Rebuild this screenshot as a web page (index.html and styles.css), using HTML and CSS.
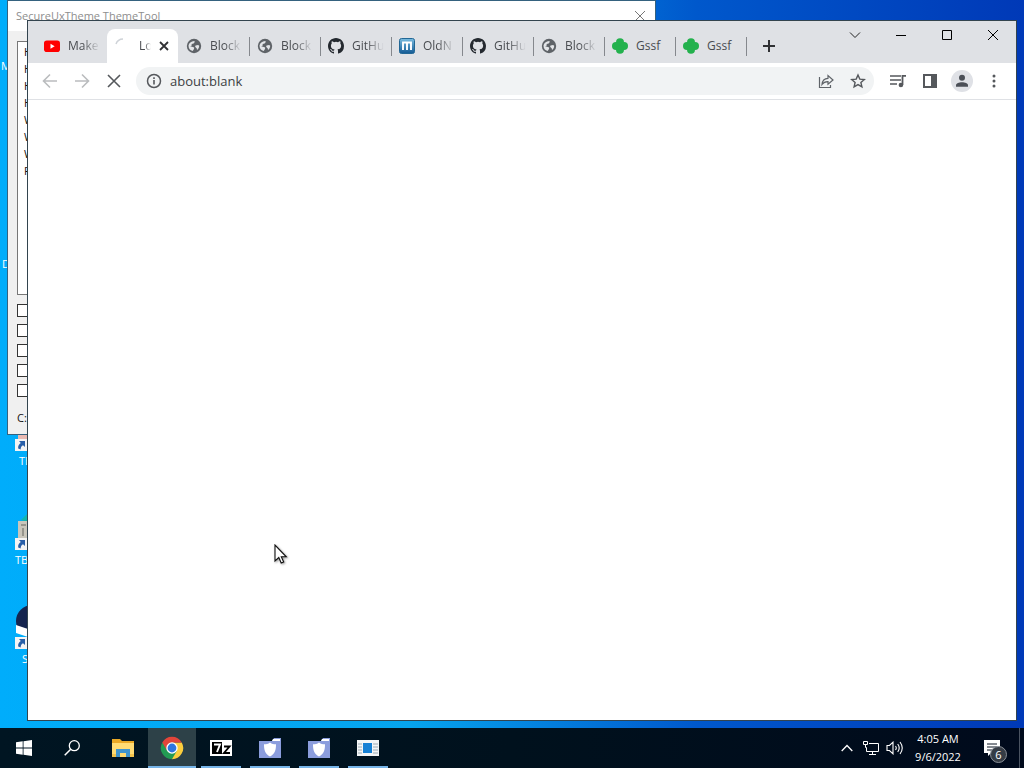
FILE: index.html
```html
<!DOCTYPE html>
<html lang="en">
<head>
<meta charset="utf-8">
<title>Desktop</title>
<meta name="viewport" content="width=device-width, initial-scale=1">
<link rel="stylesheet" href="styles.css">
</head>
<body>
<svg class="defs" aria-hidden="true">
  <symbol id="globe" viewBox="0 0 16 16"><circle cx="8" cy="8" r="7.2" fill="#5f6368"/><path d="M2.500 7.500C3 5 5 3 8.300 2.900L8.800 4 7.600 5.500 5.600 6 5.800 7.400 4.200 8.200 6.800 8.900 8.200 9.400 8 11 6.700 12.900C4 12.500 2.500 10.500 2.500 7.500ZM9.500 7.500 12.100 6.900 13.200 7.800C13.200 9.600 12.300 11.300 11 12L10.800 10.400 9.100 8.700Z" fill="#e3e5e8"/></symbol>
  <symbol id="github" viewBox="0 0 16 16"><path d="M8 0C3.58 0 0 3.58 0 8c0 3.54 2.29 6.53 5.47 7.59.4.07.55-.17.55-.38 0-.19-.01-.82-.01-1.49-2.01.37-2.53-.49-2.69-.94-.09-.23-.48-.94-.82-1.13-.28-.15-.68-.52-.01-.53.63-.01 1.08.58 1.23.82.72 1.21 1.87.87 2.33.66.07-.52.28-.87.51-1.07-1.78-.2-3.64-.89-3.64-3.95 0-.87.31-1.59.82-2.15-.08-.2-.36-1.02.08-2.12 0 0 .67-.21 2.2.82a7.6 7.6 0 0 1 4 0c1.53-1.04 2.2-.82 2.2-.82.44 1.1.16 1.92.08 2.12.51.56.82 1.27.82 2.15 0 3.07-1.87 3.75-3.65 3.95.29.25.54.73.54 1.48 0 1.07-.01 1.93-.01 2.2 0 .21.15.46.55.38A8.01 8.01 0 0 0 16 8c0-4.42-3.58-8-8-8Z" fill="#24292f"/></symbol>
  <symbol id="clover" viewBox="0 0 16 16"><g fill="#23b14d"><circle cx="8" cy="4.2" r="4"/><circle cx="4" cy="8" r="4"/><circle cx="12" cy="8" r="4"/><circle cx="8" cy="11.8" r="4"/></g></symbol>
  <symbol id="shortcut" viewBox="0 0 12 12"><path d="M0 0h12v12H0Z" fill="#f4f4f4"/><path d="M4 2h6v6L8 6.200C6.300 7.200 5.600 8.500 5.700 10.500L3.200 9.400C2.800 7 4 5.300 5.800 4Z" fill="#285fa8"/></symbol>
  <symbol id="shield-folder" viewBox="0 0 22 20"><path d="M0 3h13l2-3h7v20H0Z" fill="#8b9ddd"/><path d="M14 1h7v2h-8Z" fill="#fff"/><path d="M11 4.500c2 1.500 3.500 1.700 6 1.700 0 6-1 9.500-6 12.200-5-2.700-6-6.200-6-12.200 2.500 0 4-.2 6-1.700Z" fill="#fff"/></symbol>
</svg>

<div class="desktop">
  <main class="workspace">
    <span class="shortcut shortcut-m">M</span>
    <span class="shortcut shortcut-d">D</span>
    <div class="shortcut shortcut-te">
      <svg class="shortcut-icon" viewBox="0 0 32 32"><path d="M3 10h26v12H3Z" fill="#e8b9b2"/><use href="#shortcut" y="20" width="12" height="12"/></svg>
      <span>TE</span>
    </div>
    <div class="shortcut shortcut-tb">
      <svg class="shortcut-icon" viewBox="0 0 32 32"><path d="M6 2 12-4v8Z" fill="#12b6ad"/><path d="M3 3h27v24H3Z" fill="#c9c6bb"/><path d="M6 6h5v2H6ZM7 10h2v8H7Z" fill="#96958c"/><use href="#shortcut" y="20" width="12" height="12"/></svg>
      <span>TB</span>
    </div>
    <div class="shortcut shortcut-s">
      <svg class="shortcut-icon" viewBox="0 0 32 32"><circle cx="17" cy="4" r="16" fill="#14244f"/><path d="M1 8 13 12v8L1 16Z" fill="#fff"/><use href="#shortcut" y="20" width="12" height="12"/></svg>
      <span>S</span>
    </div>

    <section class="tool" aria-label="SecureUxTheme ThemeTool">
      <header class="tool-title">
        <span>SecureUxTheme ThemeTool</span>
        <button class="tool-close" aria-label="Close"><svg width="12" height="12" viewBox="0 0 12 12"><path d="M1 1l10 10M11 1 1 11" stroke="#777" fill="none"/></svg></button>
      </header>
      <div class="tool-body">
        <ul class="themes">
          <li>H</li><li>H</li><li>H</li><li>H</li><li>W</li><li>W</li><li>W</li><li>F</li>
        </ul>
        <div class="checks">
          <input type="checkbox" aria-label="Option 1">
          <input type="checkbox" aria-label="Option 2">
          <input type="checkbox" aria-label="Option 3">
          <input type="checkbox" aria-label="Option 4">
          <input type="checkbox" aria-label="Option 5">
        </div>
        <p class="path">C:</p>
      </div>
    </section>

    <section class="browser" aria-label="Browser">
      <header class="strip">
        <div class="tabs">
          <button class="tab"><svg class="fav" viewBox="0 0 16 16"><rect y="2.500" width="16" height="11.500" rx="2.800" fill="#f00"/><path d="M6.500 5.800v5L10.700 8.300Z" fill="#fff"/></svg><span class="name">Make</span></button>
          <div class="tab active"><svg class="fav" viewBox="0 0 16 16"><path d="M1 6A7.500 7.500 0 0 1 8 1" stroke="#cfd3d8" stroke-width="1.500" fill="none"/></svg><span class="name">Lo</span><button class="tab-close" aria-label="Close tab"><svg width="10" height="10" viewBox="0 0 10 10"><path d="M1 1l8 8M9 1 1 9" stroke="#303134" stroke-width="1.800"/></svg></button></div>
          <button class="tab"><svg class="fav"><use href="#globe"/></svg><span class="name">Block</span></button>
          <button class="tab"><svg class="fav"><use href="#globe"/></svg><span class="name">Block</span></button>
          <button class="tab"><svg class="fav"><use href="#github"/></svg><span class="name">GitHu</span></button>
          <button class="tab"><svg class="fav" viewBox="0 0 16 16"><defs><linearGradient id="blue" x2="0" y2="1"><stop stop-color="#79bce0"/><stop offset="1" stop-color="#135a94"/></linearGradient></defs><rect x=".5" y=".5" width="15" height="15" rx="2" fill="url(#blue)" stroke="#226795"/><path d="M4 12V4.500h8V12M8 4.500V12" fill="none" stroke="#fff" stroke-width="1.900"/></svg><span class="name">OldN</span></button>
          <button class="tab"><svg class="fav"><use href="#github"/></svg><span class="name">GitHu</span></button>
          <button class="tab"><svg class="fav"><use href="#globe"/></svg><span class="name">Block</span></button>
          <button class="tab"><svg class="fav"><use href="#clover"/></svg><span class="name whole">Gssf</span></button>
          <button class="tab"><svg class="fav"><use href="#clover"/></svg><span class="name whole">Gssf</span></button>
          <button class="new-tab" aria-label="New tab"><svg width="12" height="12" viewBox="0 0 12 12"><path d="M6 0v12M0 6h12" stroke="#303134" stroke-width="2"/></svg></button>
        </div>
        <div class="caption">
          <button aria-label="Search tabs"><svg width="12" height="12" viewBox="0 0 12 12"><path d="M1 3.500l5 5 5-5" stroke="#222" fill="none"/></svg></button>
          <button aria-label="Minimize"><svg width="12" height="12" viewBox="0 0 12 12"><path d="M1 6.500h10" stroke="#000"/></svg></button>
          <button aria-label="Maximize"><svg width="12" height="12" viewBox="0 0 12 12"><path d="M1.500 1.500h9v9h-9Z" stroke="#000" fill="none"/></svg></button>
          <button aria-label="Close"><svg width="12" height="12" viewBox="0 0 12 12"><path d="M1 1l10 10M11 1 1 11" stroke="#000"/></svg></button>
        </div>
      </header>
      <nav class="toolbar">
        <button class="tool-button" aria-label="Back"><svg width="16" height="16" viewBox="0 0 16 16"><path d="M15 8H2M8 1.500 1.500 8 8 14.500" fill="none" stroke="#babcbe" stroke-width="1.600"/></svg></button>
        <button class="tool-button" aria-label="Forward"><svg width="16" height="16" viewBox="0 0 16 16"><path d="M1 8h13M8 1.500 14.500 8 8 14.500" fill="none" stroke="#babcbe" stroke-width="1.600"/></svg></button>
        <button class="tool-button" aria-label="Stop"><svg width="14" height="14" viewBox="0 0 14 14"><path d="M1 1l12 12M13 1 1 13" stroke="#55585c" stroke-width="1.600"/></svg></button>
        <div class="omnibox">
          <svg class="info" width="16" height="16" viewBox="0 0 16 16"><circle cx="8" cy="8" r="6.500" fill="none" stroke="#55585c" stroke-width="1.500"/><path d="M8 7v4.500M8 4.200v1.700" stroke="#55585c" stroke-width="1.600"/></svg>
          <input class="address" aria-label="Address" value="about:blank">
          <button class="tool-button" aria-label="Share"><svg width="16" height="16" viewBox="0 0 16 16"><path d="M1.500 4v10.500h11v-2.500M4 11.500C4.300 7.700 6.500 5.500 10 5.300V2.500l5 4.500-5 4.300V8.700C7.500 8.600 5.500 9.500 4 11.500Z" fill="none" stroke="#5f6368" stroke-width="1.200"/></svg></button>
          <button class="tool-button" aria-label="Bookmark"><svg width="16" height="16" viewBox="0 0 16 16"><path d="M8 2l1.800 4.100 4.500.4-3.400 3 1 4.400L8 11.600l-3.900 2.300 1-4.400-3.400-3 4.500-.4Z" fill="none" stroke="#55585c" stroke-width="1.400"/></svg></button>
        </div>
        <button class="tool-button" aria-label="Media"><svg width="18" height="16" viewBox="0 0 18 16"><path d="M1 3h11M1 7h11M1 11h7" stroke="#55585c" stroke-width="1.700"/><path d="M13.500 12V2.800H17" fill="none" stroke="#55585c" stroke-width="1.800"/><circle cx="11.900" cy="12" r="2.300" fill="#55585c"/></svg></button>
        <button class="tool-button" aria-label="Side panel"><svg width="14" height="14" viewBox="0 0 14 14"><path d="M0 0h14v14H0ZM2 2v10h6V2Z" fill="#55585c" fill-rule="evenodd"/></svg></button>
        <button class="tool-button" aria-label="Profile"><svg width="22" height="22" viewBox="0 0 22 22"><circle cx="11" cy="11" r="11" fill="#dfe1e6"/><circle cx="11" cy="7.800" r="3" fill="#4b4f57"/><path d="M5 16.700v-1.500c0-4 12-4 12 0v1.500Z" fill="#4b4f57"/></svg></button>
        <button class="tool-button" aria-label="Menu"><svg width="4" height="14" viewBox="0 0 4 14"><g fill="#55585c"><circle cx="2" cy="2" r="1.500"/><circle cx="2" cy="7" r="1.500"/><circle cx="2" cy="12" r="1.500"/></g></svg></button>
      </nav>
      <div class="page"></div>
    </section>

    <svg class="pointer" viewBox="0 0 14 21"><path d="M1 1v16l3.800-3.500L7.200 19l2.500-1-2.400-5.200h5Z" fill="#fff" stroke="#111" stroke-width="1.100"/></svg>
  </main>

  <footer class="taskbar">
    <button class="task" aria-label="Start"><svg width="16" height="16" viewBox="0 0 16 16"><path d="M0 2.200 6.700 1.300v6.200H0ZM7.500 1.200 16 0v7.500H7.500ZM0 8.400h6.700v6.300L0 13.800ZM7.500 8.400H16V16l-8.500-1.200Z" fill="#fff"/></svg></button>
    <button class="task" aria-label="Search"><svg width="16" height="16" viewBox="0 0 16 16"><circle cx="10.300" cy="5.700" r="5" fill="none" stroke="#fff" stroke-width="1.300"/><path d="M6.700 9.300.7 15.300" stroke="#fff" stroke-width="1.500"/></svg></button>
    <div class="apps">
      <button class="task" aria-label="File Explorer"><svg width="22" height="18" viewBox="0 0 22 18"><path d="M0 0h8l2 2h12v16H0Z" fill="#e9a826"/><path d="M0 4h22v14H0Z" fill="#ffdb73"/><path d="M4 10h14v8h-4v-4H8v4H4Z" fill="#3f94ce"/><path d="M0 15h4v3H0ZM18 15h4v3h-4Z" fill="#f4c34c"/></svg></button>
      <button class="task open current" aria-label="Chrome"><svg width="24" height="24" viewBox="0 0 24 24"><path d="M12 12V23.200A11.200 11.200 0 0 0 21.700 6.400H12Z" fill="#fccd3d"/><path d="M12 12 2.300 6.400A11.200 11.200 0 0 0 12 23.200L16.900 14.800Z" fill="#229b53"/><path d="M2.300 6.400A11.200 11.200 0 0 1 21.700 6.400H12L7.100 14.800Z" fill="#e2453a"/><circle cx="12" cy="12" r="5.700" fill="#fff"/><circle cx="12" cy="12" r="4.400" fill="#2f76de"/></svg></button>
      <button class="task open" aria-label="7-Zip"><svg width="22" height="16" viewBox="0 0 22 16"><path d="M0 0h22v16H0Z" fill="#fff"/><path d="M2 2h10v12H2Z" fill="#000"/><path d="M4 4.500h6L7 12" fill="none" stroke="#fff" stroke-width="1.900"/><path d="M14 6.500h5.500L14 13h6" fill="none" stroke="#000" stroke-width="1.900"/></svg></button>
      <button class="task open" aria-label="Folder one"><svg width="22" height="20"><use href="#shield-folder"/></svg></button>
      <button class="task open" aria-label="Folder two"><svg width="22" height="20"><use href="#shield-folder"/></svg></button>
      <button class="task open" aria-label="ThemeTool"><svg width="22" height="16" viewBox="0 0 22 16"><path d="M0 0h22v16H0Z" fill="#f3f5f6"/><path d="M6 3h9v10H6Z" fill="#1680d4"/><path d="M1 4h4M1 7h4M1 10h4M1 13h4M16 4h5M16 7h5M16 10h5M16 13h5" stroke="#9baab4"/></svg></button>
    </div>
    <div class="tray">
      <button class="tray-icon" aria-label="Show hidden icons"><svg width="12" height="8" viewBox="0 0 12 8"><path d="M.7 7 6 1.500 11.300 7" fill="none" stroke="#fff" stroke-width="1.300"/></svg></button>
      <button class="tray-icon" aria-label="Network"><svg width="16" height="14" viewBox="0 0 16 14"><path d="M6 2.500h9.500v8h-12V6.500M9.500 10.500v3M6 13.500h7M.5.500h4v3h-4ZM2.500 3.500v3h1" fill="none" stroke="#fff"/></svg></button>
      <button class="tray-icon" aria-label="Volume"><svg width="18" height="14" viewBox="0 0 18 14"><path d="M1 4.500h2.500L7 1.200v11.600L3.500 9.500H1ZM9.500 5q1.500 2 0 4M11.700 3q3 4 0 8M14 1q4.500 6 0 12" fill="none" stroke="#fff" stroke-width="1.100"/></svg></button>
      <button class="clock"><span>4:05 AM</span><span>9/6/2022</span></button>
      <button class="notices" aria-label="Notifications, 6 new"><svg width="16" height="16" viewBox="0 0 16 16"><path d="M0 0h16v13H7l-3 3v-3H0Z" fill="#fff"/><path d="M3 4h10M3 7h10M3 10h7" stroke="#0b1422"/></svg><span class="badge">6</span></button>
      <button class="peek" aria-label="Show desktop"></button>
    </div>
  </footer>
</div>
</body>
</html>
```
FILE: styles.css
```css
* { box-sizing: border-box; }

body {
  margin: 0;
  font: 12px/16px "Open Sans", "Noto Sans", sans-serif;
  color: #111;
}

button, input { font: inherit; color: inherit; }

button {
  display: flex;
  align-items: center;
  justify-content: center;
  padding: 0;
  border: 0;
  background: none;
}

svg { display: block; flex: none; }

.defs { position: absolute; width: 0; height: 0; }

.desktop {
  display: flex;
  flex-direction: column;
  height: 100vh;
  background: linear-gradient(to right, #00adfb, #06a4ee 40%, #0058cc 68%, #0039b7);
}

.workspace { position: relative; flex: 1; overflow: hidden; }

/* Desktop shortcuts */
.shortcut {
  position: absolute;
  display: flex;
  flex-direction: column;
  align-items: flex-start;
  gap: 2px;
  font-size: 11px;
  color: #fff;
}
.shortcut-icon { width: 32px; height: 32px; overflow: visible; }
.shortcut-m { left: 1px; top: 58px; }
.shortcut-d { left: 2px; top: 256px; }
.shortcut-te { left: 15px; top: 419px; }
.shortcut-tb { left: 15px; top: 518px; }
.shortcut-s { left: 15px; top: 617px; }
.shortcut-te span { margin-left: 4px; }
.shortcut-s span { margin-left: 7px; }

/* Theme tool window */
.tool {
  position: absolute;
  left: 7px;
  top: 0;
  width: 649px;
  height: 435px;
  display: flex;
  flex-direction: column;
  background: #f0f0f0;
  border: 1px solid #35627f;
}
.tool-title {
  display: flex;
  align-items: center;
  justify-content: space-between;
  height: 30px;
  padding: 0 9px 0 8px;
  background: #fff;
  color: #8e8e8e;
  font-size: 11px;
}
.tool-body { flex: 1; padding: 10px 9px; }
.themes {
  height: 254px;
  margin: 0;
  padding: 1px 6px;
  list-style: none;
  line-height: 17px;
  font-size: 11px;
  background: #fff;
  border: 1px solid #777;
}
.checks { display: grid; gap: 7px; margin-top: 9px; }
.checks input {
  appearance: none;
  width: 13px;
  height: 13px;
  margin: 0;
  background: #fff;
  border: 1px solid #333;
}
.path { margin: 13px 0 0; font-size: 11px; }
.tool-close { width: 12px; height: 30px; }

/* Browser window */
.browser {
  position: absolute;
  inset: 20px 7px 7px 27px;
  display: flex;
  flex-direction: column;
  background: #fff;
  border: 1px solid #33444e;
}
.strip {
  display: flex;
  justify-content: space-between;
  height: 42px;
  background: #dfe1e5;
}
.tabs { display: flex; padding: 8px 0 0 8px; }
.tab {
  position: relative;
  display: flex;
  align-items: center;
  justify-content: flex-start;
  gap: 8px;
  width: 71px;
  padding: 0 7px 0 8px;
  color: #494c50;
}
.tab:not(.active)::after {
  content: "";
  position: absolute;
  right: -1px;
  top: 8px;
  width: 1px;
  height: 19px;
  background: #85888d;
}
.tab:first-child::after { display: none; }
.tab.active { background: #fff; border-radius: 8px 8px 0 0; }
.fav { width: 16px; height: 16px; }
.name {
  width: 32px;
  text-align: left;
  white-space: nowrap;
  mask-image: linear-gradient(to right, #000 45%, transparent);
}
.name.whole { mask-image: none; }
.active .name { flex: none; width: 12px; }
.tab-close { flex: none; width: 10px; height: 16px; }
.new-tab { width: 28px; margin-left: 9px; }
.caption { display: flex; }
.caption button { width: 46px; height: 28px; }

.toolbar {
  display: flex;
  align-items: center;
  gap: 4px;
  height: 37px;
  padding: 0 8px;
  border-bottom: 1px solid #dfe1e5;
}
.tool-button { flex: none; width: 28px; height: 28px; }
.omnibox {
  flex: 1;
  display: flex;
  align-items: center;
  gap: 4px;
  min-width: 0;
  height: 28px;
  margin: 0 6px 0 4px;
  padding: 0 2px 0 10px;
  background: #f1f3f4;
  border-radius: 14px;
}
.address {
  flex: 1;
  min-width: 0;
  padding: 0 4px;
  border: 0;
  outline: 0;
  background: none;
  font-size: 13px;
  color: #3c4043;
}
.page { flex: 1; }

.pointer {
  position: absolute;
  left: 274px;
  top: 544px;
  width: 14px;
  height: 21px;
  filter: drop-shadow(1px 1px 1px #0006);
}

/* Taskbar */
.taskbar {
  display: flex;
  height: 40px;
  background: linear-gradient(to right, #001522, #00111d 50%, #000a1c);
  color: #fff;
}
.task { position: relative; width: 48px; height: 40px; }
.apps { display: flex; gap: 1px; margin-left: 3px; }
.task.open::after {
  content: "";
  position: absolute;
  left: 4px;
  right: 4px;
  bottom: 0;
  height: 2px;
  background: #76b4e8;
}
.task.current { background: #2d4148; }
.task.current::after { left: 0; right: 0; }
.tray { display: flex; margin-left: auto; }
.tray-icon { width: 24px; }
.clock {
  flex-direction: column;
  width: 62px;
  font-size: 11px;
  line-height: 18px;
}
.notices { position: relative; width: 46px; margin-right: 4px; }
.badge {
  position: absolute;
  left: 21px;
  top: 18px;
  width: 17px;
  height: 17px;
  border: 1px solid #8a9098;
  border-radius: 50%;
  background: #353c45;
  font-size: 11px;
  line-height: 15px;
}
.peek { width: 5px; border-left: 1px solid #4a5361; }
```
